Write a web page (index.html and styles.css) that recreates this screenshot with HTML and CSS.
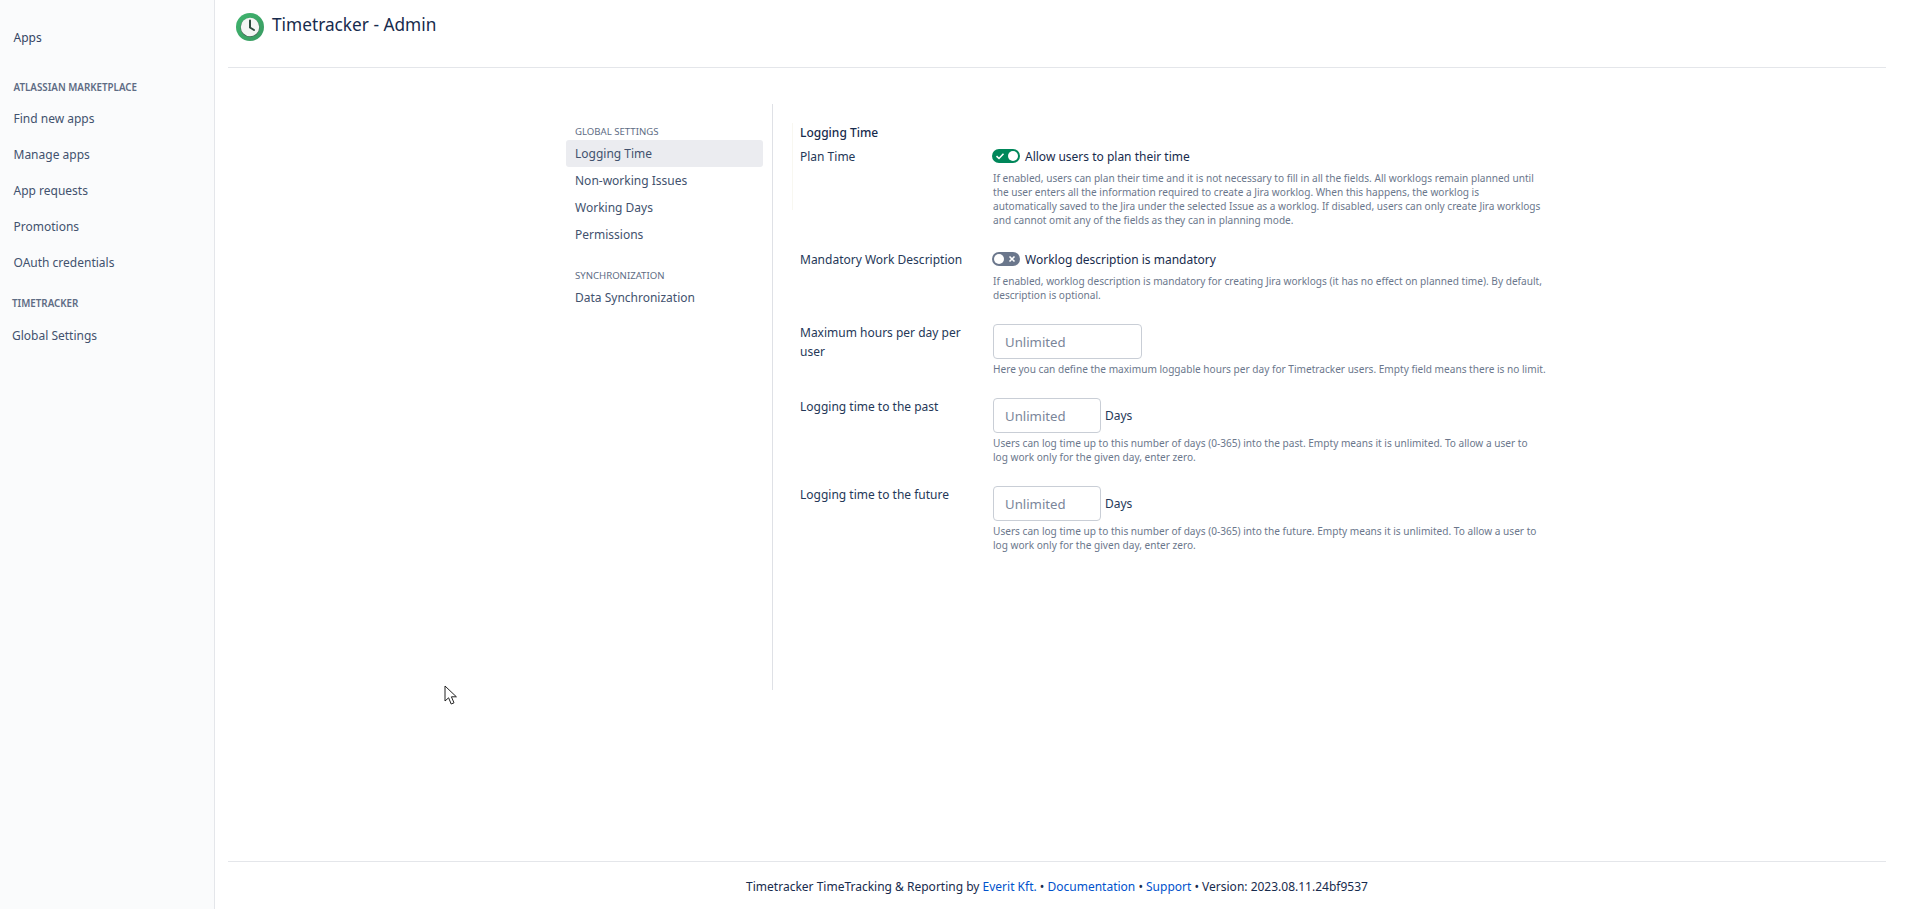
FILE: index.html
```html
<!DOCTYPE html>
<html lang="en">
<head>
<meta charset="utf-8">
<title>Timetracker - Admin</title>
<link rel="stylesheet" href="styles.css">
</head>
<body>
<div class="layout">
  <aside class="sidebar">
    <div class="side-apps">Apps</div>
    <div class="side-head">ATLASSIAN MARKETPLACE</div>
    <ul class="side-list">
      <li>Find new apps</li>
      <li>Manage apps</li>
      <li>App requests</li>
      <li>Promotions</li>
      <li>OAuth credentials</li>
    </ul>
    <div class="side-head side-head-tt">TIMETRACKER</div>
    <ul class="side-list side-list-tt">
      <li>Global Settings</li>
    </ul>
  </aside>
  <div class="main">
    <header class="header">
      <svg class="logo" viewBox="0 0 28 28" width="28" height="28" aria-hidden="true">
        <defs>
          <linearGradient id="shade" x1="0" y1="0" x2="1" y2="1">
            <stop offset="0" stop-color="#3fb56e"/>
            <stop offset="1" stop-color="#3a9a62"/>
          </linearGradient>
        </defs>
        <circle cx="14" cy="14" r="14" fill="url(#shade)"/>
        <circle cx="14" cy="14.5" r="9.5" fill="#4b5a55"/>
        <circle cx="14" cy="14" r="9.2" fill="#f4f6f4"/>
        <path d="M14 7.5V14.5L18 17" fill="none" stroke="#2f4a3e" stroke-width="2" stroke-linecap="round"/>
      </svg>
      <h1 class="title">Timetracker - Admin</h1>
    </header>
    <div class="content">
      <nav class="subnav">
        <div class="subnav-head">GLOBAL SETTINGS</div>
        <a class="subnav-item active">Logging Time</a>
        <a class="subnav-item">Non-working Issues</a>
        <a class="subnav-item">Working Days</a>
        <a class="subnav-item">Permissions</a>
        <div class="subnav-head subnav-head-2">SYNCHRONIZATION</div>
        <a class="subnav-item">Data Synchronization</a>
      </nav>
      <section class="panel">
        <h2 class="panel-title">Logging Time</h2>
        <div class="form">
          <div class="row row-plan">
            <label class="label">Plan Time</label>
            <div class="field">
              <div class="toggle-line">
                <span class="toggle on">
                  <svg viewBox="0 0 10 10" width="10" height="10" aria-hidden="true"><path d="M1.5 5.2L4 7.5L8.5 2.8" fill="none" stroke="#fff" stroke-width="1.6"/></svg>
                  <i class="knob"></i>
                </span>
                <span>Allow users to plan their time</span>
              </div>
              <p class="help">If enabled, users can plan their time and it is not necessary to fill in all the fields. All worklogs remain planned until<br>the user enters all the information required to create a Jira worklog. When this happens, the worklog is<br>automatically saved to the Jira under the selected Issue as a worklog. If disabled, users can only create Jira worklogs<br>and cannot omit any of the fields as they can in planning mode.</p>
            </div>
          </div>
          <div class="row row-mand">
            <label class="label">Mandatory Work Description</label>
            <div class="field">
              <div class="toggle-line">
                <span class="toggle off">
                  <i class="knob"></i>
                  <svg viewBox="0 0 10 10" width="10" height="10" aria-hidden="true"><path d="M2.5 2.5L7.5 7.5M7.5 2.5L2.5 7.5" fill="none" stroke="#fff" stroke-width="1.6"/></svg>
                </span>
                <span>Worklog description is mandatory</span>
              </div>
              <p class="help">If enabled, worklog description is mandatory for creating Jira worklogs (it has no effect on planned time). By default,<br>description is optional.</p>
            </div>
          </div>
          <div class="row row-max">
            <label class="label label-input">Maximum hours per day per<br>user</label>
            <div class="field field-input">
              <input class="input input-wide" placeholder="Unlimited">
              <p class="help help-input">Here you can define the maximum loggable hours per day for Timetracker users. Empty field means there is no limit.</p>
            </div>
          </div>
          <div class="row row-past">
            <label class="label label-input">Logging time to the past</label>
            <div class="field field-input">
              <div class="input-line"><input class="input input-narrow" placeholder="Unlimited"><span>Days</span></div>
              <p class="help help-input">Users can log time up to this number of days (0-365) into the past. Empty means it is unlimited. To allow a user to<br>log work only for the given day, enter zero.</p>
            </div>
          </div>
          <div class="row">
            <label class="label label-input">Logging time to the future</label>
            <div class="field field-input">
              <div class="input-line"><input class="input input-narrow" placeholder="Unlimited"><span>Days</span></div>
              <p class="help help-input">Users can log time up to this number of days (0-365) into the future. Empty means it is unlimited. To allow a user to<br>log work only for the given day, enter zero.</p>
            </div>
          </div>
        </div>
      </section>
    </div>
    <footer class="footer">
      Timetracker TimeTracking &amp; Reporting by <a>Everit Kft.</a> • <a>Documentation</a> • <a>Support</a> • Version: 2023.08.11.24bf9537
    </footer>
  </div>
</div>
<svg class="cursor" viewBox="0 0 14 21" width="14" height="21" aria-hidden="true"><path d="M1 1V16L4.6 12.8L7.2 19L10 17.8L7.4 11.8H12.4Z" fill="#fff" stroke="#222" stroke-width="1"/></svg>
</body>
</html>
```
FILE: styles.css
```css
* { box-sizing: border-box; }
html, body { margin: 0; height: 100%; }
body {
  font-family: "Noto Sans", "Open Sans", sans-serif;
  font-size: 12px;
  color: #172b4d;
  background: #fff;
  overflow: hidden;
}
.layout { display: flex; height: 909px; padding-right: 29px; }
.sidebar {
  width: 215px;
  flex: none;
  background: #fafbfc;
  border-right: 1px solid #e4e6ea;
  padding-top: 28px;
  color: #42526e;
}
.side-apps { padding-left: 13.5px; height: 20px; line-height: 20px; color: #344563; }
.side-head {
  margin-top: 30px;
  padding-left: 13.5px;
  height: 20px;
  line-height: 20px;
  font-size: 9.8px;
  font-weight: 600;
  color: #5e6c84;
}
.side-head-tt { margin-top: 13px; padding-left: 12px; }
.side-list { list-style: none; margin: 3px 0 0; padding: 0 0 0 13.5px; }
.side-list li { height: 36px; line-height: 36px; }
.side-list-tt { padding-left: 12px; margin-top: 4px; }
.main { flex: 1; min-width: 0; display: flex; flex-direction: column; padding-left: 13px; }
.header {
  height: 68px;
  border-bottom: 1px solid #e4e6ea;
  display: flex;
  align-items: flex-start;
  padding: 13px 0 0 8px;
  gap: 8px;
}
.logo { flex: none; }
.title { margin: 0; font-size: 17.25px; font-weight: 400; line-height: 24px; color: #172b4d; }
.content { display: flex; flex: 1; padding: 36px 0 0 338px; min-height: 0; }
.subnav { width: 206px; height: 586px; flex: none; padding-top: 20px; }
.subnav-head { font-size: 9.6px; line-height: 16px; height: 16px; padding-left: 9px; color: #5e6c84; }
.subnav-head-2 { margin-top: 20px; }
.subnav-item {
  display: block;
  width: 197px;
  height: 27px;
  line-height: 27px;
  padding-left: 9px;
  color: #42526e;
  border-radius: 3px;
}
.subnav-item.active { background: #ebecf0; }
.panel {
  position: relative;
  height: 586px;
  border-left: 1px solid #dfe1e6;
  padding: 21px 0 0 27px;
  flex: 1;
}
.panel::before {
  content: "";
  position: absolute;
  left: 19px;
  top: 19px;
  width: 1px;
  height: 87px;
  background: #f8f7f1;
}
.panel-title { margin: 0; font-size: 12px; font-weight: 500; line-height: 16px; color: #172b4d; }
.form { margin-top: 3px; }
.row { display: grid; grid-template-columns: 193px 1fr; }
.row-plan { height: 103px; }
.row-mand { height: 65px; }
.row-max { height: 74px; margin-top: 11px; }
.row-past { height: 88px; }
.label { line-height: 20px; color: #253858; padding-top: 3px; }
.label-input { padding-top: 0; line-height: 19px; }
.field { min-width: 0; }
.field-input { padding-top: 1px; }
.toggle-line { display: flex; align-items: center; gap: 5px; height: 24px; color: #172b4d; margin-left: -1px; }
.toggle {
  width: 28px;
  height: 14px;
  border-radius: 7px;
  display: flex;
  align-items: center;
  justify-content: space-between;
  padding: 0 2px 0 3px;
}
.toggle.on { background: #00875a; }
.toggle.off { background: #6b778c; padding: 0 3px 0 2px; }
.knob { width: 10px; height: 10px; border-radius: 50%; background: #fff; display: block; }
.help { margin: 3px 0 0; font-size: 10.1px; line-height: 14px; color: #6b778c; white-space: nowrap; }
.input {
  display: block;
  height: 35px;
  padding: 0 11px;
  border: 1px solid #c9ced6;
  border-radius: 4px;
  font: inherit;
  font-size: 13.2px;
  background: #fff;
  color: #172b4d;
}
.input::placeholder { color: #7a869a; opacity: 1; }
.input-wide { width: 149px; }
.input-narrow { width: 108px; }
.input-line { display: flex; align-items: center; gap: 4px; color: #253858; }
.footer {
  height: 48px;
  border-top: 1px solid #e4e6ea;
  text-align: center;
  font-size: 12px;
  line-height: 50px;
  color: #172b4d;
}
.footer a { color: #0052cc; }
.cursor { position: absolute; left: 444px; top: 685px; }
```
